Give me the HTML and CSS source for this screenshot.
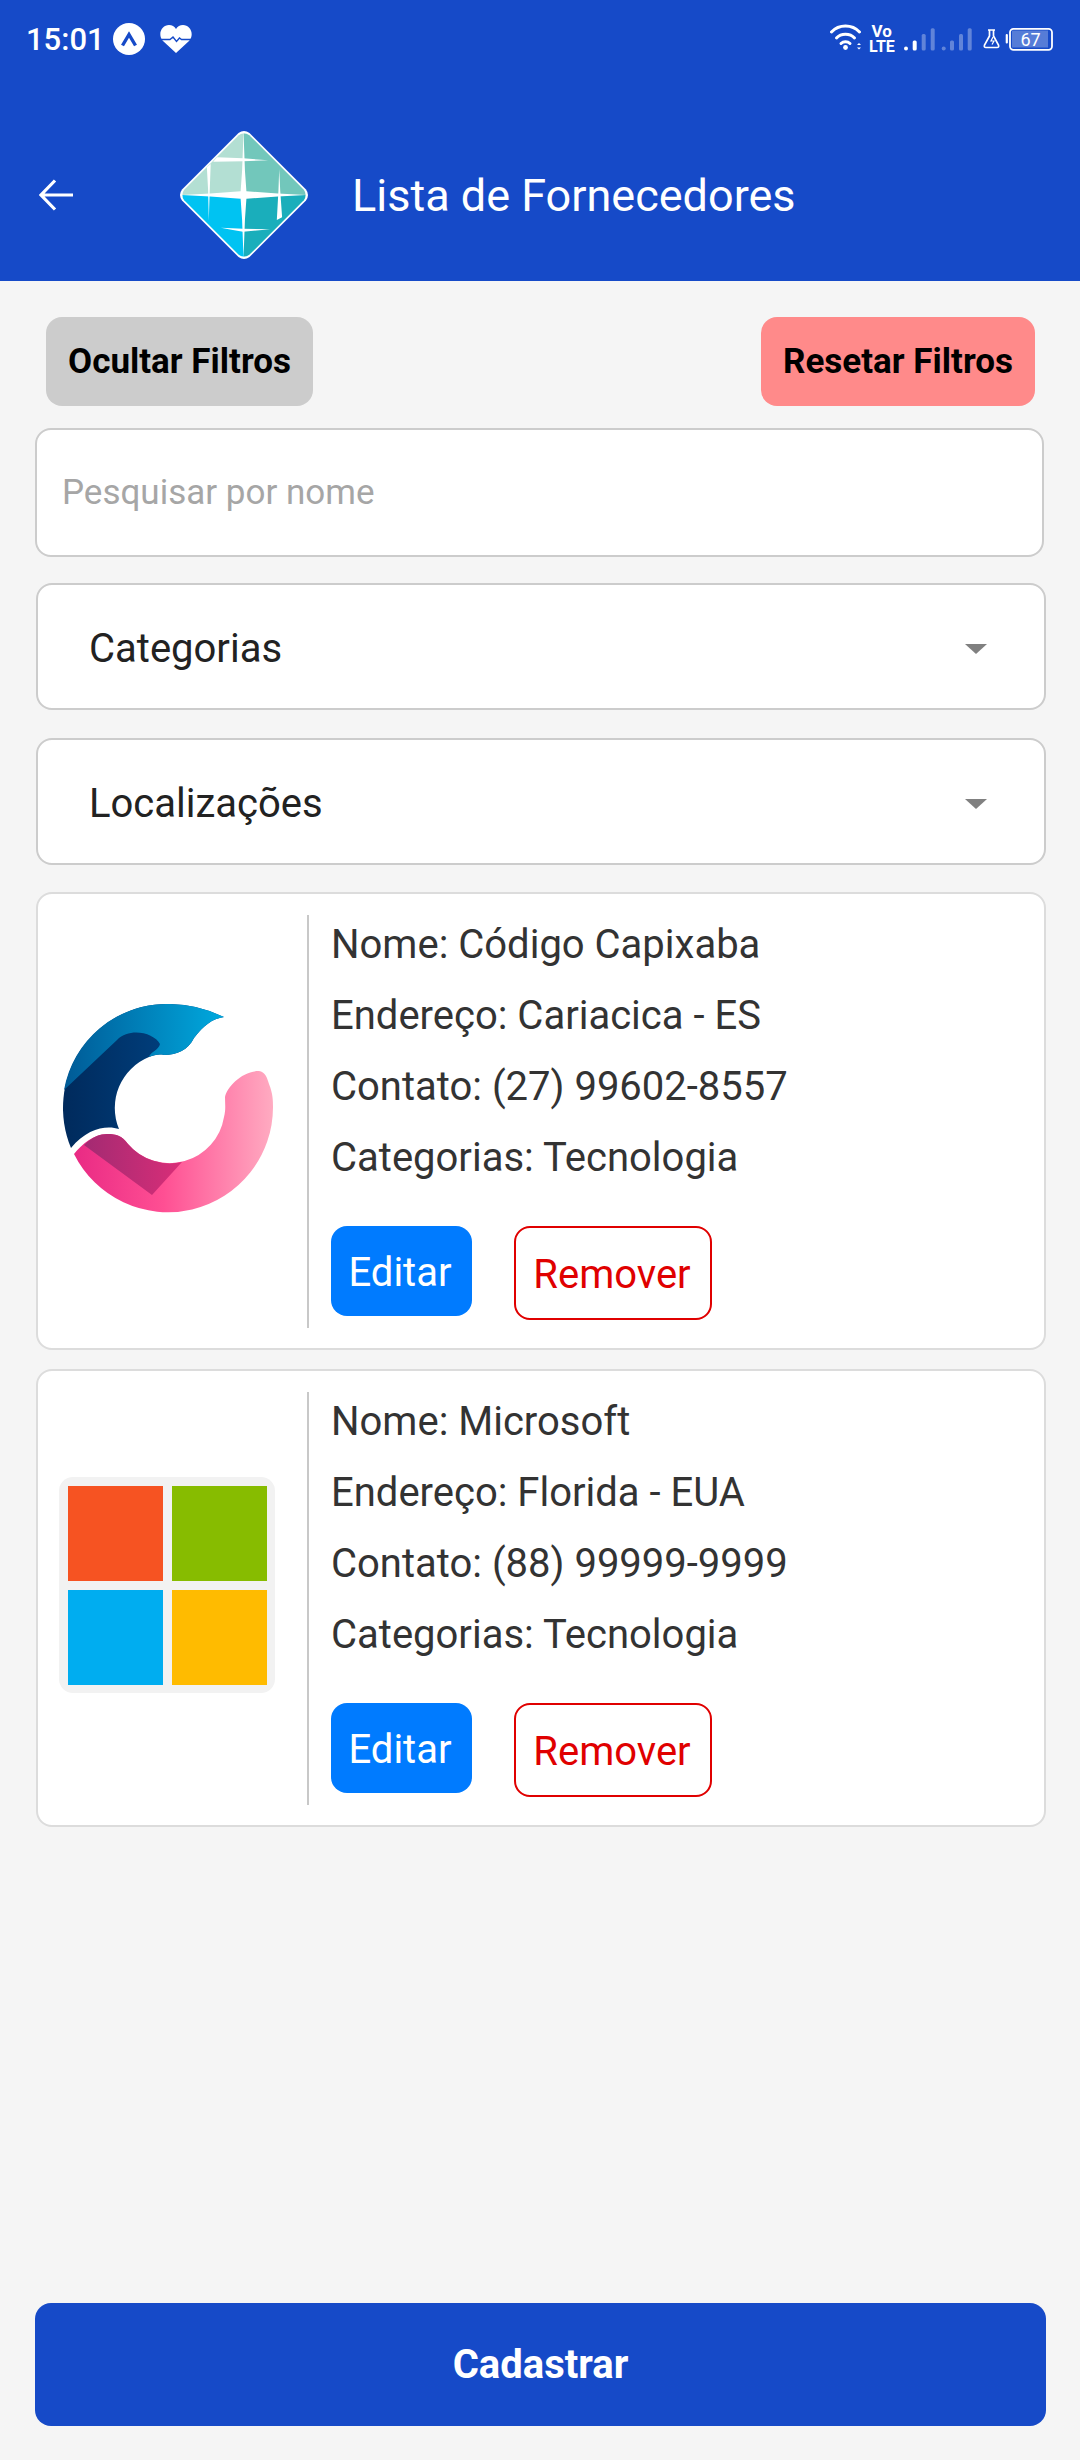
FILE: index.html
```html
<!DOCTYPE html>
<html lang="pt">
<head>
<meta charset="utf-8">
<title>Lista de Fornecedores</title>
<link rel="stylesheet" href="styles.css">
</head>
<body>
<div class="screen">
  <header class="header">
    <div class="status">
      <div class="status-left">
        <span class="time">15:01</span>
        <svg class="st-a" viewBox="0 0 32 32"><circle cx="16" cy="16" r="16" fill="#fff"/><path d="M9.500 22.500 L16 11.500 L22.500 22.500" fill="none" stroke="#164ac8" stroke-width="3.400"/></svg>
        <svg class="st-heart" viewBox="0 0 32 28"><path d="M16 28 L3 16 C-3 9 2 0 9 0 C12 0 14.500 1.500 16 4 C17.500 1.500 20 0 23 0 C30 0 35 9 29 16Z" fill="#fff"/><path d="M1 14.500 H10 L13 12 L16.500 16.500 L19.500 13 L21.500 14.500 H31" fill="none" stroke="#164ac8" stroke-width="1.400"/></svg>
      </div>
      <svg class="status-right" viewBox="0 0 250 80">
        <g fill="none" stroke="#fff" stroke-linecap="round" stroke-width="3">
          <path d="M1.500 32 C9 24 22 24 29.500 32"/>
          <path d="M6.500 38 C11 33 20 33 24.500 38"/>
          <path d="M11 43.500 C13.500 41 17.500 41 20 43.500"/>
        </g>
        <circle cx="15.500" cy="47.500" r="2.400" fill="#fff"/>
        <path d="M27 45 l2 -2 l2 2z M27 47.500 l2 2 l2 -2z" fill="#fff"/>
        <text class="vo" x="41.500" y="36.500">Vo</text>
        <text class="lte" x="39" y="52">LTE</text>
        <g fill="#fff">
          <rect x="74" y="46.500" width="4" height="4" rx="2"/>
          <rect x="82.700" y="40.500" width="4" height="10" rx="1.500"/>
        </g>
        <g fill="#fff" opacity=".32">
          <rect x="91.700" y="34" width="4" height="16.500" rx="1.500"/>
          <rect x="100.700" y="28.300" width="4" height="22.200" rx="1.500"/>
          <rect x="111.700" y="46.500" width="4" height="4" rx="2"/>
          <rect x="120" y="40.500" width="4" height="10" rx="1.500"/>
          <rect x="129" y="34" width="4" height="16.500" rx="1.500"/>
          <rect x="137.700" y="28.300" width="4" height="22.200" rx="1.500"/>
        </g>
        <path d="M158 30 h7 M159.500 30 v6 l-5 9 q-.800 2.500 1.500 2.500 h11 q2.300 0 1.500 -2.500 l-5 -9 v-6" fill="none" stroke="#fff" stroke-width="1.700"/>
        <path d="M163 37 l-2 4 h3 l-2 3.500" fill="none" stroke="#fff" stroke-width="1.200"/>
        <rect x="175.700" y="34" width="2.200" height="9.500" rx="1" fill="#fff"/>
        <rect x="182" y="30.500" width="36" height="17" fill="#fff" opacity=".28"/>
        <rect x="180" y="28.800" width="42" height="21" rx="3.500" fill="none" stroke="#fff" stroke-width="1.800"/>
        <text class="batt" x="190.500" y="45.500">67</text>
      </svg>
    </div>
    <div class="bar">
      <svg class="back" viewBox="0 0 34 34"><path d="M34 17 H3 M16 2.500 L2 17 L16 31.500" fill="none" stroke="#fff" stroke-width="3.200"/></svg>
      <svg class="logo" viewBox="0 0 130 130">
        <defs><clipPath id="dia"><path d="M59.500 3 Q65 -1 70.500 3 L127 59.500 Q131 65 127 70.500 L70.500 127 Q65 131 59.500 127 L3 70.500 Q-1 65 3 59.500Z"/></clipPath></defs>
        <path d="M59.500 3 Q65 -1 70.500 3 L127 59.500 Q131 65 127 70.500 L70.500 127 Q65 131 59.500 127 L3 70.500 Q-1 65 3 59.500Z" fill="#fff"/>
        <g transform="translate(65 65) scale(.965) translate(-65 -65)">
          <g clip-path="url(#dia)">
            <rect x="0" y="0" width="65" height="65" fill="#b3dfd3"/>
            <rect x="65" y="0" width="65" height="65" fill="#72c7bb"/>
            <rect x="0" y="65" width="65" height="65" fill="#00c3f2"/>
            <rect x="65" y="65" width="65" height="65" fill="#1aaebb"/>
            <path d="M64.500 0 L66 40 L67.500 61 L100 63.500 L130 65 L100 66.500 L67.500 69 L66 90 L64.500 130 L63 90 L61.500 69 L30 66.500 L0 65 L30 63.500 L61.500 61 L63 40Z" fill="#fff"/>
            <path d="M37 26 L64 27 L90 29 L64 30 L33 30.500Z" fill="#fff"/>
            <path d="M41 99 L64 100 L92 100.500 L64 103 L52 101Z" fill="#fff"/>
            <path d="M26.500 36 L30.500 33 L29.500 60 L28.500 92 L27.800 60Z" fill="#fff"/>
            <path d="M101.500 38 L102.500 60 L104.500 88 L99 91 L100.700 60Z" fill="#fff"/>
          </g>
        </g>
      </svg>
      <h1 class="title">Lista de Fornecedores</h1>
    </div>
  </header>

  <main class="content">
    <div class="filter-actions">
      <button class="fbtn fbtn-gray">Ocultar Filtros</button>
      <button class="fbtn fbtn-red">Resetar Filtros</button>
    </div>
    <div class="search">Pesquisar por nome</div>
    <div class="select"><span>Categorias</span><i class="caret"></i></div>
    <div class="select select-2"><span>Localizações</span><i class="caret"></i></div>

    <section class="card">
      <div class="thumb">
        <svg class="cc-logo" viewBox="0 0 211 209">
          <defs>
            <linearGradient id="g1" x1="0" x2="1"><stop offset="0" stop-color="#005a96"/><stop offset="1" stop-color="#00a9de"/></linearGradient>
            <linearGradient id="g2" x1="0" x2="1"><stop offset="0" stop-color="#002a5c"/><stop offset="1" stop-color="#004a8e"/></linearGradient>
            <linearGradient id="g3" x1="0" x2="1"><stop offset="0" stop-color="#e92a84"/><stop offset=".45" stop-color="#ff4f93"/><stop offset="1" stop-color="#ffabc1"/></linearGradient>
            <linearGradient id="g4" x1="0" x2="1"><stop offset="0" stop-color="#a32a72"/><stop offset="1" stop-color="#d92e78"/></linearGradient>
          </defs>
          <path d="M9 144 A104 104 0 0 1 105 0 A125 125 0 0 1 162 13 C150 15 142 21 132 34 C126 46 115 51 102 51 C97 50 92 51 87 53 A55 55 0 0 0 57 125 C45 121 25 124 9 144Z" fill="url(#g2)"/>
          <path d="M2 86 A104 104 0 0 1 105 0 A125 125 0 0 1 162 13 C150 15 142 21 132 34 C126 46 115 51 102 51 C97 50 92 51 87 53 C88 48 97 46 98 40 C92 29 68 23 55 36Z" fill="url(#g1)"/>
          <path d="M12 150 C20 140 32 130 45 130 C55 130 60 132 66 140 A55 55 0 0 0 162 113 C164 105 163 100 163 93 C165 83 180 67 197 67 C203 68 205 73 207 80 C211 90 211 97 211 103 A105 105 0 0 1 12 150Z" fill="url(#g3)"/>
          <path d="M22 141 C30 133 38 130 45 130 C55 130 60 132 66 140 A55 55 0 0 0 120 158 L90 191Z" fill="url(#g4)"/>
        </svg>
      </div>
      <div class="divider"></div>
      <div class="info">
        <p>Nome: Código Capixaba</p>
        <p>Endereço: Cariacica - ES</p>
        <p>Contato: (27) 99602-8557</p>
        <p>Categorias: Tecnologia</p>
        <div class="actions"><button class="edit">Editar</button><button class="remove">Remover</button></div>
      </div>
    </section>

    <section class="card card-2">
      <div class="thumb">
        <div class="ms">
          <i class="ms-a"></i><i class="ms-b"></i><i class="ms-c"></i><i class="ms-d"></i>
        </div>
      </div>
      <div class="divider"></div>
      <div class="info">
        <p>Nome: Microsoft</p>
        <p>Endereço: Florida - EUA</p>
        <p>Contato: (88) 99999-9999</p>
        <p>Categorias: Tecnologia</p>
        <div class="actions"><button class="edit">Editar</button><button class="remove">Remover</button></div>
      </div>
    </section>

    <button class="submit">Cadastrar</button>
  </main>
</div>
</body>
</html>
```
FILE: styles.css
```css
* { box-sizing: border-box; }
html, body { margin: 0; padding: 0; }
body { width: 1080px; height: 2460px; background: #f5f5f5; font-family: Roboto, "Liberation Sans", sans-serif; overflow: hidden; }
.screen { width: 1080px; height: 2460px; display: flex; flex-direction: column; }
.header { height: 281px; background: #164ac8; color: #fff; display: flex; flex-direction: column; }
.status { height: 80px; display: flex; justify-content: space-between; }
.status-left { display: flex; align-items: center; padding: 0 0 0 26px; height: 78px; }
.time { font-size: 31px; font-weight: 500; line-height: 1; }
.st-a { width: 32px; height: 32px; margin-left: 8px; }
.st-heart { width: 32px; height: 28px; margin-left: 15px; }
.status-right { width: 250px; height: 80px; flex: none; }
.vo { font: 700 17px Roboto, sans-serif; fill: #fff; }
.lte { font: 700 16px Roboto, sans-serif; fill: #fff; }
.batt { font: 400 18px Roboto, sans-serif; fill: #fff; }
.bar { flex: 1; display: flex; align-items: center; padding-top: 28px; }
.back { width: 34px; height: 34px; margin-left: 39px; }
.logo { width: 130px; height: 130px; margin-left: 106px; }
.title { margin: 0 0 0 43px; font-size: 45px; font-weight: 400; line-height: 1; padding-top: 2px; }
.content { flex: 1; padding: 36px 34px 34px 35px; display: flex; flex-direction: column; }
.filter-actions { display: flex; justify-content: space-between; padding: 0 11px 0 11px; }
.fbtn { height: 89px; border: 0; border-radius: 16px; font: 700 35px Roboto, sans-serif; color: #000; padding: 0; }
.fbtn-gray { width: 267px; background: #cccccc; }
.fbtn-red { width: 274px; background: #ff8a8a; }
.search { margin-top: 22px; width: 1009px; height: 129px; border: 2px solid #cccccc; border-radius: 16px; background: #fff; color: #a6a6a6; font-size: 35px; display: flex; align-items: center; padding-left: 25px; }
.select { margin: 26px 0 0 1px; width: 1010px; height: 127px; border: 2px solid #cccccc; border-radius: 16px; background: #fff; color: #222; font-size: 40px; display: flex; align-items: center; justify-content: space-between; padding: 4px 57px 0 51px; }
.select-2 { margin-top: 28px; }
.caret { width: 0; height: 0; border-left: 11px solid transparent; border-right: 11px solid transparent; border-top: 10px solid #808080; }
.card { margin: 27px 0 0 1px; width: 1010px; height: 458px; border: 2px solid #dcdcdc; border-radius: 16px; background: #fff; display: flex; align-items: stretch; }
.card-2 { margin-top: 19px; }
.thumb { width: 269px; display: flex; align-items: center; justify-content: center; padding: 0 11px 26px 0; }
.cc-logo { width: 211px; height: 209px; }
.ms { width: 216px; height: 216px; background: #f2f2f2; border-radius: 14px; padding: 9px; display: grid; grid-template-columns: 95px 95px; grid-template-rows: 95px 95px; gap: 9px; flex: none; }
.ms-a { background: #f65322; }
.ms-b { background: #87bc00; }
.ms-c { background: #00adf0; }
.ms-d { background: #ffbb00; }
.divider { width: 2px; margin: 21px 0 20px; background: #c8c8c8; }
.info { padding: 15px 0 0 22px; flex: 1; }
.info p { margin: 0; height: 71px; line-height: 71px; font-size: 40px; color: #333; }
.actions { display: flex; align-items: flex-start; gap: 42px; margin-top: 33px; }
.edit { width: 141px; height: 90px; border: 0; border-radius: 16px; background: #007bff; color: #fff; font: 400 40px Roboto, sans-serif; padding: 2px 3px 0 0; }
.remove { width: 198px; height: 94px; border: 2px solid #e00000; border-radius: 16px; background: #fff; color: #e00000; font: 400 40px Roboto, sans-serif; padding: 2px 2px 0 0; }
.submit { margin-top: auto; width: 1011px; height: 123px; border: 0; border-radius: 16px; background: #164ac8; color: #fff; font: 700 40px Roboto, sans-serif; flex: none; }
```
